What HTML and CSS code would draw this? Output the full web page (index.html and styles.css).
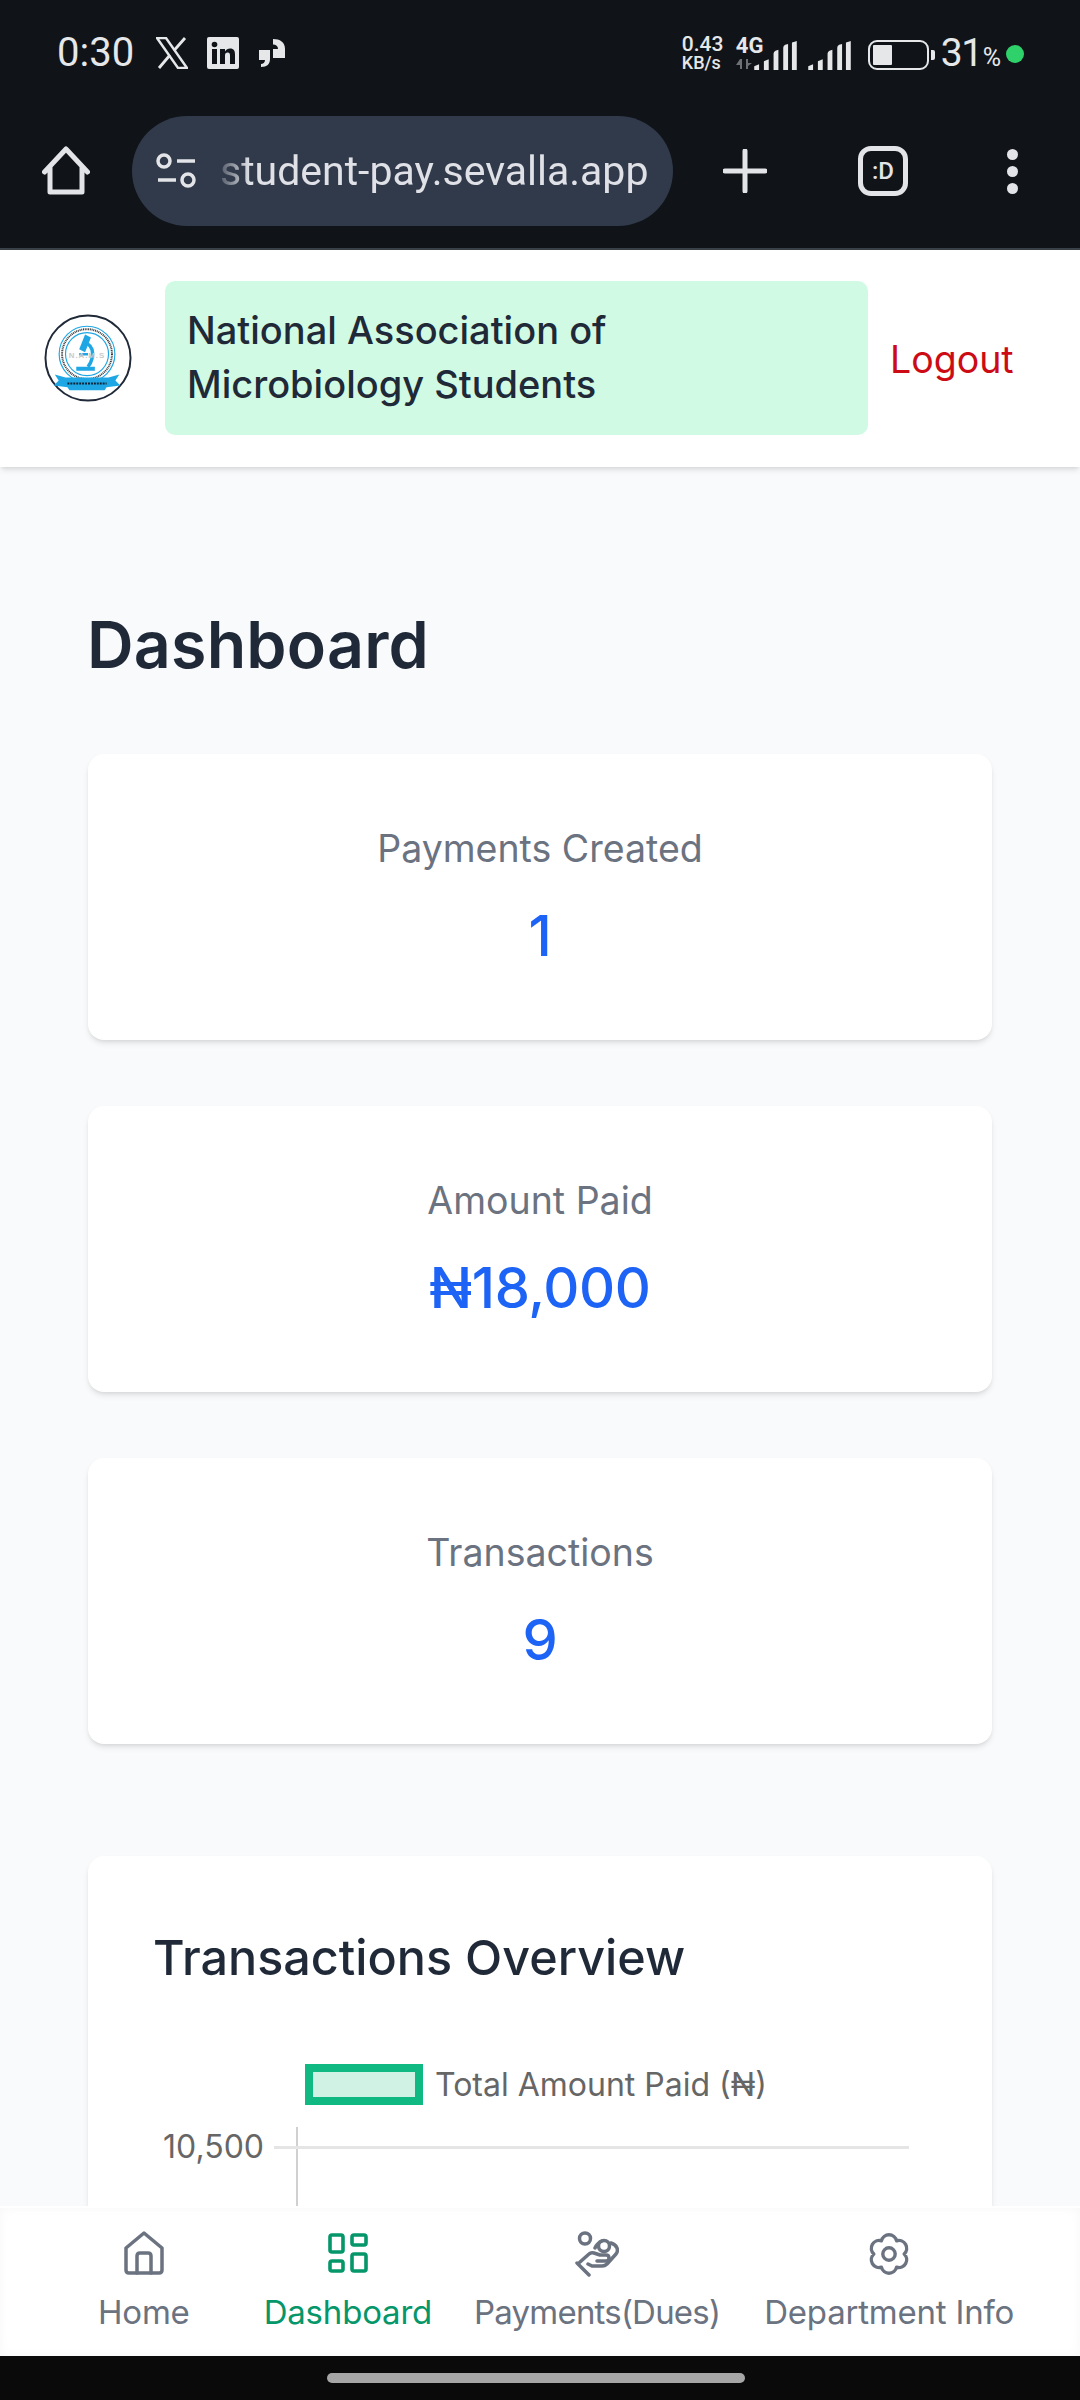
FILE: index.html
```html
<!DOCTYPE html>
<html lang="en">
<head>
<meta charset="utf-8">
<title>Dashboard</title>
<link rel="stylesheet" href="styles.css">
</head>
<body>
<div class="screen">
  <div class="chrome">
    <div class="status">
      <div class="status-left">
        <span class="time">0:30</span>
        <svg class="st-x" viewBox="0 0 32 32"><path d="M1 1h9l21 30h-9z" fill="none" stroke="#e6e7e9" stroke-width="2.4"/><path d="M29 1 18 13.500M14 18 3 31" stroke="#e6e7e9" stroke-width="2.800" fill="none"/></svg>
        <svg class="st-in" viewBox="0 0 32 32"><rect width="32" height="32" rx="2" fill="#e6e7e9"/><rect x="5" y="12" width="5" height="15" fill="#101419"/><circle cx="7.500" cy="7.500" r="2.800" fill="#101419"/><path d="M13 12h5v2.500c1-1.800 3-3 5-3 4 0 5 2.500 5 6V27h-5v-8.500c0-2-.6-3-2.300-3-1.900 0-2.700 1.200-2.700 3V27h-5z" fill="#101419"/></svg>
        <svg class="st-q" viewBox="0 0 28 30"><path d="M1 12h11v9c0 5-3 8-9 8v-3c2 0 4-1.500 4-4H1z" fill="#e6e7e9"/><path d="M27 20H15v-9h5c0-3-2-4.500-5-4.500V1c7 0 12 3 12 10z" fill="#e6e7e9"/></svg>
      </div>
      <div class="status-right">
        <div class="speed">0.43<br>KB/s</div>
        <div class="net"><span class="net-4g">4G</span><svg class="net-arrows" viewBox="0 0 16 10"><path d="M4 0h2v10H4V6H0zM10 0h2v4h4l-4 3v3h-2z" fill="#6d7074"/></svg></div>
        <svg class="sig sig-a" viewBox="0 0 44 30"><path d="M0 30v-4l5-2v6zM10 30v-9l5-2v11zM20 30V13q0-2 2-3l3-1v21zM30 30V7q0-2 2-3l3-1v27zM39 30V2q0-1 2-1l3-1v30z" fill="#e6e7e9"/></svg>
        <svg class="sig sig-b" viewBox="0 0 44 30"><path d="M0 30v-4l5-2v6zM10 30v-9l5-2v11zM20 30V13q0-2 2-3l3-1v21zM30 30V7q0-2 2-3l3-1v27zM39 30V2q0-1 2-1l3-1v30z" fill="#e6e7e9"/></svg>
        <div class="battery"><div class="battery-body"><div class="battery-fill"></div></div><div class="battery-cap"></div></div>
        <span class="pct">31<small>%</small></span>
        <span class="dot"></span>
      </div>
    </div>
    <div class="toolbar">
      <svg class="tb-home" viewBox="0 0 48 50"><path d="M2.500 26 24 3l21.500 23M8 21v25h32V21" fill="none" stroke="#e3e4e8" stroke-width="5" stroke-linejoin="round" stroke-linecap="round"/></svg>
      <div class="omnibox">
        <svg class="tune" viewBox="0 0 40 36"><circle cx="8" cy="8" r="6" fill="none" stroke="#e3e4e8" stroke-width="3.500"/><path d="M21 8h18M2 27h18" stroke="#e3e4e8" stroke-width="3.500"/><circle cx="32" cy="27" r="6" fill="none" stroke="#e3e4e8" stroke-width="3.500"/></svg>
        <span class="url">student-pay.sevalla.app</span>
      </div>
      <svg class="tb-plus" viewBox="0 0 44 44"><path d="M22 2v40M2 22h40" stroke="#e3e4e8" stroke-width="5" stroke-linecap="round"/></svg>
      <div class="tabs">:D</div>
      <div class="menu"><i></i><i></i><i></i></div>
    </div>
  </div>

  <header class="app-header">
    <svg class="logo" viewBox="0 0 90 90">
      <circle cx="45" cy="45" r="43.500" fill="#fff" stroke="#1f2937" stroke-width="2"/>
      <circle cx="44" cy="41" r="28.500" fill="none" stroke="#1ea7e4" stroke-width="1.200"/>
      <circle cx="44" cy="41" r="25.500" fill="none" stroke="#333" stroke-width="2" stroke-dasharray="1 .8"/>
      <circle cx="44" cy="41" r="22" fill="none" stroke="#1ea7e4" stroke-width="1.200"/>
      <path d="M42 21l6 3-6 15-6-3z" fill="#1ea7e4"/>
      <path d="M44 30q8 5 5 16-1 4-4 8" fill="none" stroke="#1ea7e4" stroke-width="3.500"/>
      <path d="M33 54h19v4H33zM36 40h9v2.500h-9z" fill="#1ea7e4"/>
      <text class="logo-txt" x="44" y="45">N.A.M.S</text>
      <path d="M11 62l11 3 44 0 11-3-4 6 5 5-14 2-2 3H26l-2-3-14-2 5-5z" fill="#1ea7e4"/>
      <path d="M24 71h40" stroke="#123" stroke-width="2" stroke-dasharray="2 1"/>
    </svg>
    <div class="org">National Association of Microbiology Students</div>
    <a class="logout">Logout</a>
  </header>

  <main class="main">
    <h1 class="title">Dashboard</h1>
    <section class="card stat"><div class="stat-label">Payments Created</div><div class="stat-value">1</div></section>
    <section class="card stat"><div class="stat-label">Amount Paid</div><div class="stat-value">₦18,000</div></section>
    <section class="card stat"><div class="stat-label">Transactions</div><div class="stat-value">9</div></section>
    <section class="card chart">
      <h2 class="chart-title">Transactions Overview</h2>
      <div class="legend"><span class="swatch"></span><span class="legend-text">Total Amount Paid (₦)</span></div>
      <div class="plot">
        <span class="tick">10,500</span>
        <div class="grid"><div class="gridline"></div></div>
      </div>
    </section>
  </main>

  <nav class="bottom-nav">
    <a class="nav-item">
      <svg viewBox="0 0 40 44" fill="none" stroke="currentColor" stroke-width="3.500" stroke-linejoin="round" stroke-linecap="round"><path d="M20 2 38 17V39q0 3-3 3H5q-3 0-3-3V17z"/><path d="M13 42V25q0-3 3-3h8q3 0 3 3v17"/></svg>
      <span>Home</span>
    </a>
    <a class="nav-item active">
      <svg viewBox="0 0 40 42" fill="none" stroke="currentColor" stroke-width="3.600" stroke-linejoin="round"><rect x="2" y="3" width="13" height="17" rx="2"/><rect x="24" y="3" width="14" height="10" rx="2"/><rect x="2" y="29" width="13" height="10" rx="2"/><rect x="24" y="22" width="14" height="17" rx="2"/></svg>
      <span>Dashboard</span>
    </a>
    <a class="nav-item nav-pay">
      <svg class="icon-hand" viewBox="0 0 44 46" fill="none" stroke="currentColor" stroke-width="3.500" stroke-linejoin="round" stroke-linecap="round"><circle cx="10" cy="7.500" r="5.500"/><circle cx="29" cy="15" r="5.500"/><path d="M20 17q2-5 7-7M36 12c6 2 8 7 5 11L32 33q-2 2-5 2H17l-4-2"/><path d="M2 32l12 12M5 31l9-8q2-2 5-1l6 2h6q3 0 3 3t-3 3h-9"/></svg>
      <span>Payments(Dues)</span>
    </a>
    <a class="nav-item">
      <svg class="icon-gear" viewBox="2 .6 20 22.800" fill="none" stroke="currentColor" stroke-width="1.700" stroke-linejoin="round"><circle cx="12" cy="12" r="3.100"/><path d="M15.800 5.420A3.900 3.900 0 0 0 8.200 5.420 3.900 3.900 0 0 0 4.400 12 3.900 3.900 0 0 0 8.200 18.580 3.900 3.900 0 0 0 15.800 18.580 3.900 3.900 0 0 0 19.600 12 3.900 3.900 0 0 0 15.800 5.420z"/></svg>
      <span>Department Info</span>
    </a>
  </nav>

  <div class="gesture"><div class="gesture-bar"></div></div>
</div>
</body>
</html>
```

FILE: styles.css
```css
* { box-sizing: border-box; }
html, body { margin: 0; padding: 0; }
body { width: 1080px; height: 2400px; overflow: hidden; font-family: Inter, "Noto Sans", sans-serif; background: #f9fafb; }
h1, h2 { margin: 0; }
svg { display: block; flex: none; }

.screen { width: 1080px; height: 2400px; display: flex; flex-direction: column; overflow: hidden; }

/* system + browser chrome */
.chrome { flex: none; height: 250px; background: #101419; border-bottom: 2px solid #3a4047; color: #e6e7e9; font-family: Roboto, sans-serif; }
.status { height: 108px; padding: 34px 56px 0 57px; display: flex; justify-content: space-between; align-items: flex-start; }
.status-left { display: flex; align-items: center; height: 38px; }
.time { font-size: 40px; line-height: 38px; width: 99px; }
.st-x { width: 32px; height: 32px; margin-left: 0; }
.st-in { width: 32px; height: 32px; margin-left: 19px; }
.st-q { width: 28px; height: 30px; margin-left: 19px; }
.status-right { display: flex; align-items: flex-start; height: 38px; }
.speed { width: 48px; font-size: 18px; line-height: 17px; font-weight: 500; margin-top: 0; white-space: nowrap; }
.speed::first-line { font-size: 21px; line-height: 20px; }
.net { width: 34px; margin-left: 6px; display: flex; flex-direction: column; }
.net-4g { font-size: 22px; line-height: 19px; font-weight: 700; margin-top: 2px; }
.net-arrows { width: 16px; height: 10px; margin-top: 4px; }
.sig { width: 43px; height: 29px; margin-top: 7px; }
.sig-a { margin-left: -16px; }
.sig-b { margin-left: 11px; }
.battery { margin-left: 17px; margin-top: 6px; display: flex; align-items: center; }
.battery-body { width: 61px; height: 30px; border: 2.500px solid #e6e7e9; border-radius: 9px; padding: 3px; }
.battery-fill { width: 19px; height: 100%; background: #e6e7e9; border-radius: 1px; }
.battery-cap { width: 4px; height: 10px; margin-left: 2px; background: #e6e7e9; border-radius: 0 2px 2px 0; }
.pct { margin-left: 6px; font-size: 39px; line-height: 38px; letter-spacing: -1.500px; }
.pct small { font-size: 25px; letter-spacing: 0; margin-left: 1px; }
.dot { width: 18px; height: 18px; margin: 11px 0 0 5px; border-radius: 50%; background: #2fd26a; }

.toolbar { height: 140px; position: relative; display: flex; align-items: flex-start; padding: 8px 0 0 132px; }
.tb-home { position: absolute; left: 42px; top: 38px; width: 48px; height: 50px; }
.omnibox { flex: none; width: 541px; height: 110px; border-radius: 55px; background: #313a4a; display: flex; align-items: center; padding-left: 24px; overflow: hidden; }
.tune { width: 40px; height: 36px; }
.url { width: 440px; margin-left: 24px; font-size: 41px; color: #dfe1e7; white-space: nowrap; -webkit-mask-image: linear-gradient(90deg, rgba(0,0,0,.2), #000 30px); mask-image: linear-gradient(90deg, rgba(0,0,0,.2), #000 30px); }
.tb-plus { width: 44px; height: 44px; margin: 33px 0 0 50px; }
.tabs { flex: none; width: 50px; height: 50px; margin: 30px 0 0 91px; border: 5px solid #e3e4e8; border-radius: 13px; font-size: 24px; font-weight: 500; color: #e3e4e8; display: flex; align-items: center; justify-content: center; }
.menu { margin: 33px 0 0 99px; display: flex; flex-direction: column; gap: 6px; }
.menu i { display: block; width: 11px; height: 11px; border-radius: 50%; background: #e3e4e8; }

/* app header */
.app-header { flex: none; height: 217px; background: #fff; box-shadow: 0 4px 6px -1px rgba(0,0,0,.1), 0 2px 4px -2px rgba(0,0,0,.1); display: flex; align-items: center; padding: 0 0 1px 44px; position: relative; z-index: 1; }
.logo { width: 88px; height: 88px; }
.logo-txt { font: 700 8px "Liberation Sans", sans-serif; fill: #c9c9c9; text-anchor: middle; letter-spacing: 1px; }
.org { width: 703px; height: 154px; margin-left: 33px; padding: 22px 220px 22px 22px; background: #d1fae5; border-radius: 10px; font-size: 38px; line-height: 54px; font-weight: 500; color: #1f2937; }
.logout { margin: 3px 0 0 22px; font-size: 37.500px; color: #cc0b14; }

/* main */
.main { flex: 1; min-height: 0; overflow: hidden; padding: 140px 88px 0; }
.title { font-size: 64.500px; line-height: 76px; font-weight: 600; letter-spacing: .2px; color: #1f2937; margin-bottom: 71px; margin-left: -1px; }
.card { background: #fff; border-radius: 16px; box-shadow: 0 4px 6px -1px rgba(0,0,0,.1), 0 2px 4px -2px rgba(0,0,0,.1); }
.stat { height: 286px; margin-bottom: 66px; display: flex; flex-direction: column; align-items: center; padding-top: 70px; }
.stat-label { font-size: 37.500px; line-height: 50px; color: #6b7280; }
.stat-value { font-size: 56px; line-height: 80px; margin-top: 22px; font-weight: 550; letter-spacing: -.4px; color: #1d63f6; }
.chart { margin-top: 112px; height: 600px; padding: 72px 65px; }
.chart-title { font-size: 48.500px; line-height: 60px; font-weight: 500; color: #1f2937; }
.legend { display: flex; align-items: center; margin: 76px 0 0 152px; height: 41px; }
.swatch { flex: none; width: 118px; height: 41px; margin-right: 12px; background: #cff2e5; border: 8px solid #10b981; }
.legend-text { font-size: 32px; color: #666; }
.plot { display: flex; align-items: flex-start; margin-top: 22px; height: 200px; }
.tick { flex: none; width: 111px; text-align: right; font-size: 32px; line-height: 40px; color: #666; }
.grid { width: 635px; margin-left: 10px; padding-top: 19px; height: 200px; background: linear-gradient(#d0d0d0, #d0d0d0) 22px 0 / 2px 100% no-repeat; }
.gridline { height: 3px; background: #e5e5e5; }

/* bottom nav */
.bottom-nav { flex: none; height: 150px; background: #fff; border-top: 2px solid #fff; box-shadow: inset 0 0 12px rgba(0,0,0,.035); padding-top: 23px; display: flex; position: relative; z-index: 2; }
.nav-item { display: flex; flex-direction: column; align-items: center; color: #6b7280; font-size: 33px; line-height: 44px; letter-spacing: -.2px; white-space: nowrap; }
.nav-pay { letter-spacing: -.8px; }
.nav-item svg { width: 40px; height: 44px; margin-bottom: 15px; }
.nav-item svg.icon-hand { width: 44px; height: 46px; margin-bottom: 13px; }
.nav-item svg.icon-gear { width: 40px; height: 46px; margin-bottom: 13px; }
.nav-item:nth-child(1) { margin-left: 98px; }
.nav-item:nth-child(2) { margin-left: 74px; }
.nav-item:nth-child(3) { margin-left: 42px; }
.nav-item:nth-child(4) { margin-left: 44px; }
.nav-item.active { color: #059669; }

.gesture { flex: none; height: 44px; background: #0a0a0a; padding: 17px 8px 0 0; display: flex; justify-content: center; }
.gesture-bar { width: 418px; height: 10px; border-radius: 5px; background: #a6a6a6; }
```
